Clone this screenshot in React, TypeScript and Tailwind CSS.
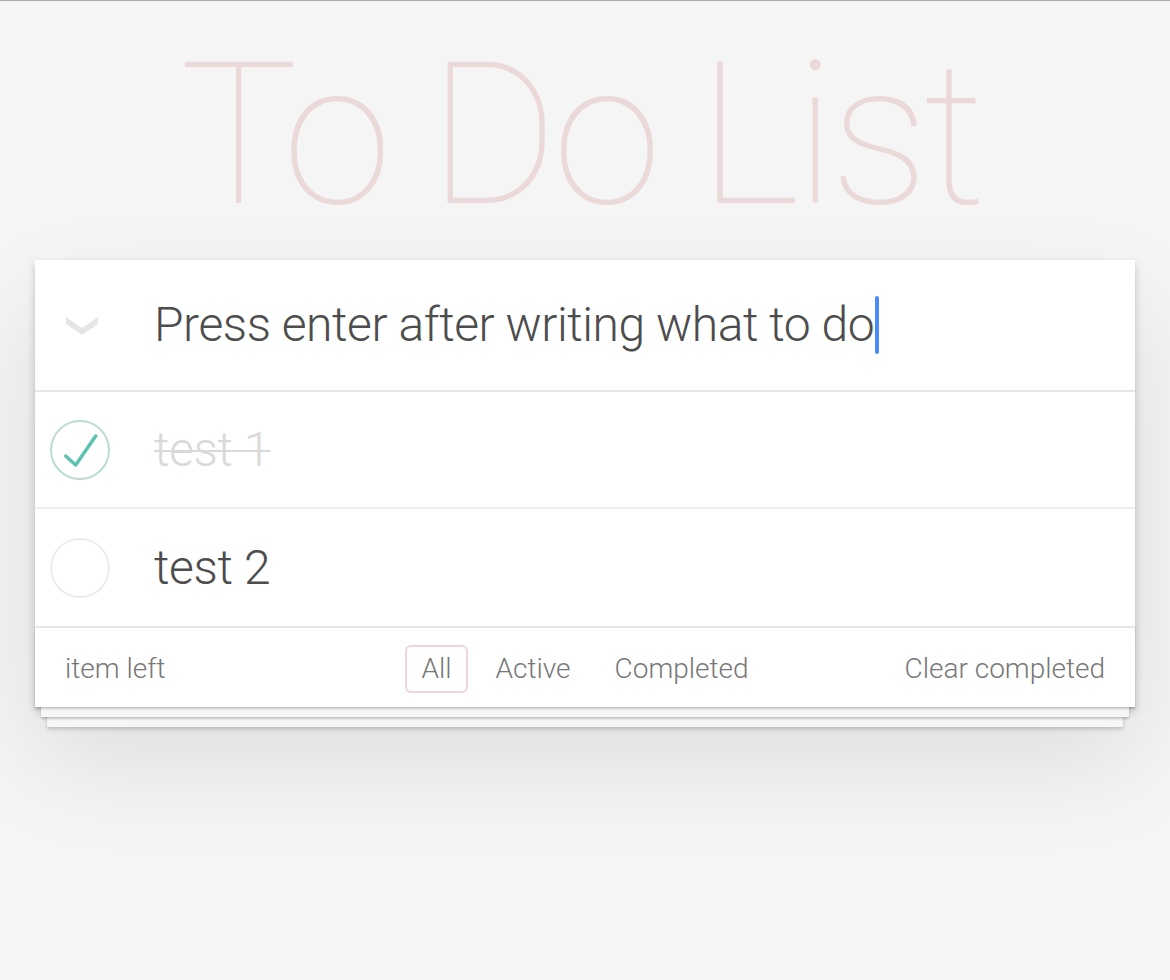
import React from 'react';

// Baris todo: lingkaran centang + teks
function TodoRow({ text, done, last }: { text: string; done: boolean; last?: boolean }) {
  return (
    <li className={`flex items-center h-[117px] ${last ? '' : 'border-b-2 border-[#ededed]'}`}>
      <div className="w-[119px] flex pl-[14px]">
        <svg width="62" height="62" viewBox="0 0 62 62">
          <circle cx="31" cy="31" r="29" fill="none" stroke={done ? '#bddad5' : '#ededed'} strokeWidth="2" />
          {done && (
            <polyline
              points="16.7,37 26.7,46 46.7,17"
              fill="none"
              stroke="#5dc2af"
              strokeWidth="3.5"
              strokeLinecap="round"
              strokeLinejoin="round"
            />
          )}
        </svg>
      </div>
      <span
        className={`text-[48px] leading-none tracking-[-0.35px] ${
          done ? 'text-[#d9d9d9] line-through decoration-2' : 'text-[#4d4d4d]'
        }`}
      >
        {text}
      </span>
    </li>
  );
}

export default function App() {
  return (
    <div
      className="min-h-[980px] bg-[#f5f5f5] border-t border-[#a9a9a9] text-[#4d4d4d] font-light"
      style={{ fontFamily: 'Roboto, "Liberation Sans", Arial, sans-serif' }}
    >
      {/* Judul besar tipis */}
      <h1 className="h-[259px] pt-[26px] pr-[10px] text-center text-[198px] leading-[1.1] font-thin text-[#ebd8d8] tracking-[-5.4px]">
        To Do List
      </h1>

      {/* Kartu utama */}
      <section className="relative mx-auto w-[1100px] bg-white shadow-[0_4px_8px_0_rgba(0,0,0,0.2),0_50px_100px_0_rgba(0,0,0,0.1)]">
        {/* Input baru */}
        <div className="flex items-center h-[130px]">
          <div className="w-[119px] flex pl-[30px]">
            <svg width="34" height="22" viewBox="0 0 34 22">
              <polygon points="1,3 17,14 33,3 33,10 17,21 1,10" fill="#e6e6e6" />
            </svg>
          </div>
          <div className="flex items-center text-[48px] leading-none tracking-[-0.45px] text-[#4d4d4d]">
            <span>Press enter after writing what to do</span>
            <span className="inline-block w-[4px] h-[58px] ml-[1px] rounded-sm bg-[#4a8cf7]" />
          </div>
        </div>

        {/* Daftar todo */}
        <ul className="border-t-2 border-[#e6e6e6]">
          <TodoRow text="test 1" done />
          <TodoRow text="test 2" done={false} last />
        </ul>

        {/* Footer dengan efek kertas bertumpuk */}
        <footer className="grid grid-cols-[1fr_auto_1fr] items-center h-[81px] pt-[2px] px-[30px] border-t-2 border-[#e6e6e6] text-[28px] text-[#777] shadow-[0_2px_2px_rgba(0,0,0,0.2),0_16px_0_-6px_#f6f6f6,0_18px_2px_-6px_rgba(0,0,0,0.2),0_32px_0_-12px_#f6f6f6,0_34px_4px_-12px_rgba(0,0,0,0.2)]">
          <span>item left</span>
          <ul className="flex items-center">
            <li className="mx-[6px] px-[14px] h-[48px] flex items-center rounded-[6px] border-2 border-[#efd5d5]">All</li>
            <li className="mx-[6px] px-[14px] h-[48px] flex items-center border-2 border-transparent">Active</li>
            <li className="mx-[6px] px-[14px] h-[48px] flex items-center border-2 border-transparent">Completed</li>
          </ul>
          <span className="justify-self-end">Clear completed</span>
        </footer>
      </section>
    </div>
  );
}
